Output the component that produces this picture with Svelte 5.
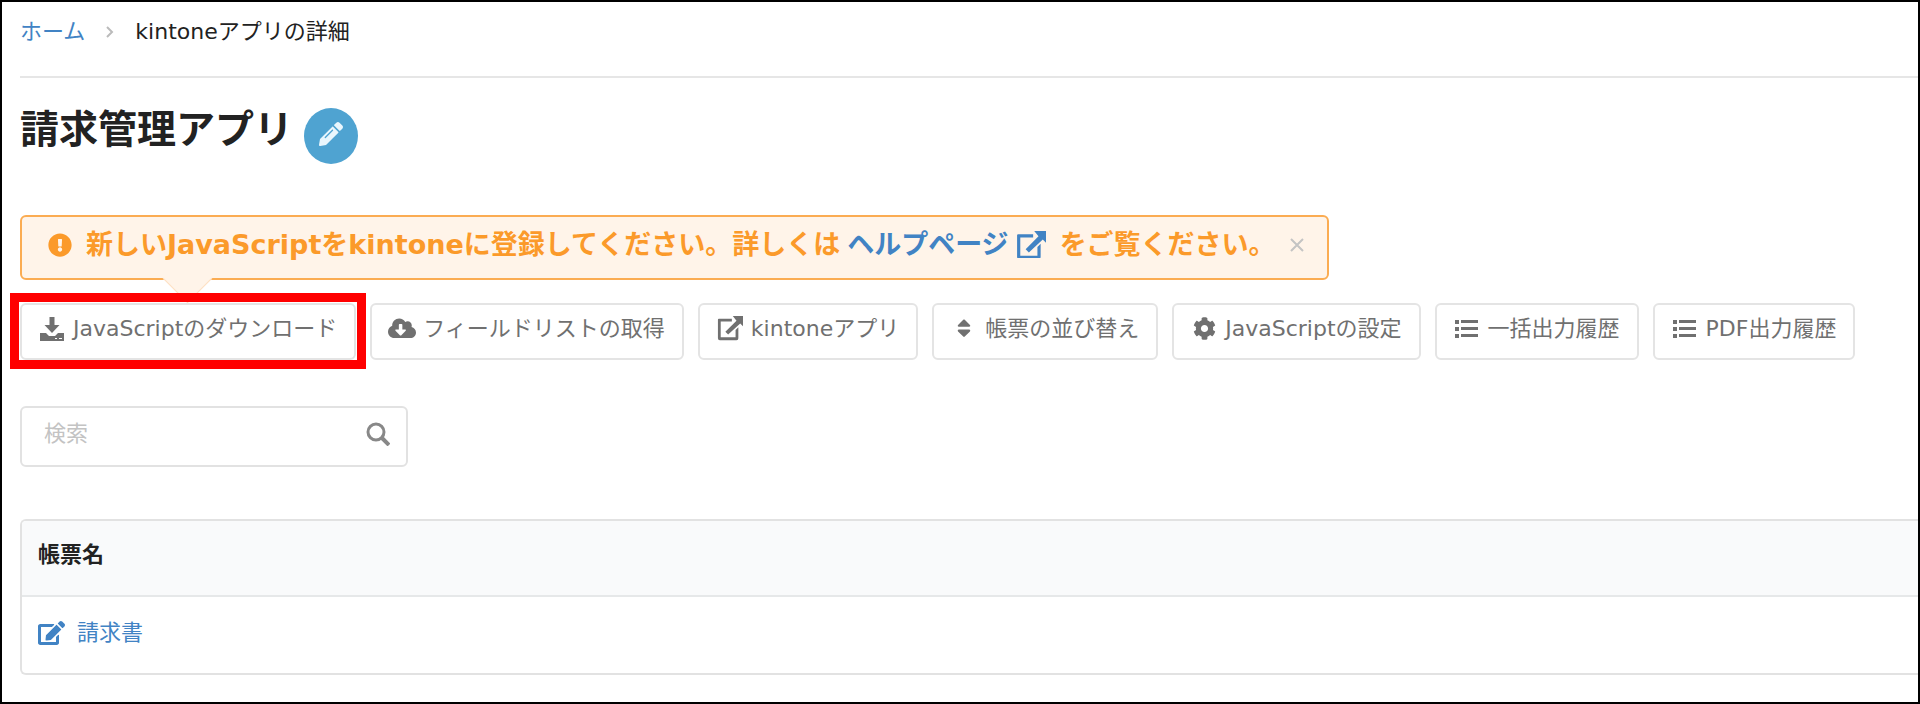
<script>
	const icons = {
		download: {
			box: '0 0 24 24',
			w: 24,
			d: 'M9.500 0h5v8h5l-7.500 8-7.500-8h5zM0 16h6l3 3h6l3-3h6v8H0zM15 21h2v1h-2zM19 21h3v1h-3z'
		},
		cloud: {
			box: '0 0 640 512',
			w: 28,
			d: 'M537.6 226.6c4.1-10.7 6.4-22.4 6.4-34.6 0-53-43-96-96-96-19.7 0-38.1 6-53.3 16.2C367 64.2 315.3 32 256 32c-88.4 0-160 71.6-160 160 0 2.7.1 5.4.2 8.1C40.2 219.8 0 273.2 0 336c0 79.5 64.5 144 144 144h368c70.7 0 128-57.3 128-128 0-61.9-44-113.6-102.4-125.4zm-132.9 88.7L299.3 420.7c-6.2 6.2-16.4 6.2-22.6 0L171.3 315.3c-10.1-10.1-2.9-27.3 11.3-27.3H248V176c0-8.8 7.2-16 16-16h48c8.8 0 16 7.2 16 16v112h65.4c14.2 0 21.4 17.2 11.3 27.3z'
		},
		external: {
			box: '0 0 28 26',
			w: 26,
			d: 'M2 3h14v3H4v17h16v-8l3-3v12a2 2 0 0 1-2 2H3a2 2 0 0 1-2-2V4a1 1 0 0 1 1-1zM17 0h11v11l-3-3L12 20l-3-3L21 5z'
		},
		sort: {
			box: '0 0 320 512',
			w: 14,
			d: 'M41 288h238c21.4 0 32.1 25.9 17 41L177 448c-9.4 9.4-24.6 9.4-33.9 0L24 329c-15.1-15.1-4.4-41 17-41zm255-105L177 64c-9.4-9.4-24.6-9.4-33.9 0L24 183c-15.1 15.1-4.4 41 17 41h238c21.4 0 32.1-25.9 17-41z'
		},
		cog: {
			box: '0 0 512 512',
			w: 23,
			d: 'M487.4 315.7l-42.6-24.6c4.3-23.2 4.3-47 0-70.2l42.6-24.6c4.9-2.8 7.1-8.6 5.5-14-11.1-35.6-30-67.8-54.7-94.6-3.8-4.1-10-5.1-14.8-2.3L380.8 110c-17.9-15.4-38.5-27.3-60.8-35.1V25.8c0-5.6-3.9-10.5-9.4-11.7-36.7-8.2-74.3-7.8-109.2 0-5.5 1.2-9.4 6.1-9.4 11.7V75c-22.2 7.9-42.8 19.8-60.8 35.1L88.7 85.5c-4.9-2.8-11-1.9-14.8 2.3-24.7 26.7-43.6 58.9-54.7 94.6-1.7 5.4.6 11.2 5.5 14L67.3 221c-4.3 23.2-4.3 47 0 70.2l-42.6 24.6c-4.9 2.8-7.1 8.6-5.5 14 11.1 35.6 30 67.8 54.7 94.6 3.8 4.1 10 5.1 14.8 2.3l42.6-24.6c17.9 15.4 38.5 27.3 60.8 35.1v49.2c0 5.6 3.9 10.5 9.4 11.7 36.7 8.2 74.3 7.8 109.2 0 5.5-1.2 9.4-6.1 9.4-11.7v-49.2c22.2-7.9 42.8-19.8 60.8-35.1l42.6 24.6c4.9 2.8 11 1.9 14.8-2.3 24.7-26.7 43.6-58.9 54.7-94.6 1.5-5.5-.7-11.3-5.6-14.1zM256 336c-44.1 0-80-35.9-80-80s35.9-80 80-80 80 35.9 80 80-35.9 80-80 80z'
		},
		list: {
			box: '0 0 24 18',
			w: 24,
			d: 'M0 0h4v4H0zM6 0h17v3H6zM0 7h4v4H0zM6 7h17v3H6zM0 14h4v4H0zM6 14h17v3H6z'
		},
		warning: {
			box: '0 0 512 512',
			w: 24,
			d: 'M504 256c0 136.997-111.043 248-248 248S8 392.997 8 256C8 119.083 119.043 8 256 8s248 111.083 248 248zm-248 50c-25.405 0-46 20.595-46 46s20.595 46 46 46 46-20.595 46-46-20.595-46-46-46zm-43.673-165.346l7.418 136c.347 6.364 5.609 11.346 11.982 11.346h48.546c6.373 0 11.635-4.982 11.982-11.346l7.418-136c.375-6.874-5.098-12.654-11.982-12.654h-63.383c-6.884 0-12.356 5.78-11.981 12.654z'
		},
		pencil: {
			box: '0 0 512 512',
			w: 24,
			d: 'M497.9 142.1l-46.1 46.1c-4.7 4.7-12.3 4.7-17 0l-111-111c-4.7-4.7-4.7-12.3 0-17l46.1-46.1c18.7-18.7 49.1-18.7 67.9 0l60.1 60.1c18.8 18.7 18.8 49.1 0 67.9zM284.2 99.8L21.6 362.4.4 483.9c-2.9 16.4 11.4 30.6 27.8 27.8l121.5-21.3 262.6-262.6c4.7-4.7 4.7-12.3 0-17l-111-111c-4.8-4.7-12.4-4.7-17.1 0zM124.1 339.9c-5.5-5.5-5.5-14.3 0-19.8l154-154c5.5-5.5 14.3-5.5 19.8 0s5.5 14.3 0 19.8l-154 154c-5.5 5.5-14.3 5.5-19.8 0z'
		},
		edit: {
			box: '0 0 576 512',
			w: 27,
			d: 'M402.6 83.2l90.2 90.2c3.8 3.8 3.8 10 0 13.8L274.4 405.6l-92.8 10.3c-12.4 1.4-22.9-9.1-21.5-21.5l10.3-92.8L388.8 83.2c3.8-3.8 10-3.8 13.8 0zm162-22.9l-48.8-48.8c-15.2-15.2-39.9-15.2-55.2 0l-35.4 35.4c-3.8 3.8-3.8 10 0 13.8l90.2 90.2c3.8 3.8 10 3.8 13.8 0l35.4-35.4c15.2-15.3 15.2-40 0-55.2zM384 346.2V448H64V128h229.8c3.2 0 6.2-1.3 8.5-3.5l40-40c7.6-7.6 2.2-20.5-8.5-20.5H48C21.5 64 0 85.5 0 112v352c0 26.5 21.5 48 48 48h352c26.5 0 48-21.5 48-48V306.2c0-10.7-12.9-16-20.5-8.5l-40 40c-2.2 2.3-3.5 5.3-3.5 8.5z'
		}
	};

	const actions = [
		{ icon: 'download', label: 'JavaScriptのダウンロード', marked: true },
		{ icon: 'cloud', label: 'フィールドリストの取得' },
		{ icon: 'external', label: 'kintoneアプリ' },
		{ icon: 'sort', label: '帳票の並び替え' },
		{ icon: 'cog', label: 'JavaScriptの設定' },
		{ icon: 'list', label: '一括出力履歴' },
		{ icon: 'list', label: 'PDF出力履歴' }
	];

	const reports = ['請求書'];

	let keyword = $state('');
	let showNotice = $state(true);
	let filtered = $derived(reports.filter((name) => name.includes(keyword)));
</script>

{#snippet icon(name, width = icons[name].w)}
	<svg class="icon" viewBox={icons[name].box} {width} aria-hidden="true">
		<path fill="currentColor" fill-rule="evenodd" d={icons[name].d} />
	</svg>
{/snippet}

<main>
	<nav>
		<a href="#home">ホーム</a>
		<svg class="chevron" viewBox="0 0 8 12" width="8" aria-hidden="true">
			<path d="M1 1l5 5-5 5" fill="none" stroke="currentColor" stroke-width="2" />
		</svg>
		<span>kintoneアプリの詳細</span>
	</nav>

	<div class="title">
		<h1>請求管理アプリ</h1>
		<button class="rename" aria-label="編集">{@render icon('pencil')}</button>
	</div>

	{#if showNotice}
		<div class="notice">
			{@render icon('warning')}
			<p>
				<span>新しいJavaScriptをkintoneに登録してください。詳しくは</span>
				<a href="#help">ヘルプページ{@render icon('external', 30)}</a>
				<span>をご覧ください。</span>
			</p>
			<button class="close" aria-label="閉じる" onclick={() => (showNotice = false)}>
				<svg viewBox="0 0 14 14" width="14" aria-hidden="true">
					<path d="M1 1l12 12M13 1L1 13" stroke="currentColor" stroke-width="2" />
				</svg>
			</button>
		</div>
	{/if}

	<div class="actions">
		{#each actions as action}
			<button class:marked={action.marked}>
				<span class="slot">{@render icon(action.icon)}</span>{action.label}
			</button>
		{/each}
	</div>

	<div class="search">
		<input type="text" placeholder="検索" aria-label="検索" bind:value={keyword} />
		<svg viewBox="0 0 24 24" width="24" aria-hidden="true">
			<g fill="none" stroke="currentColor" stroke-width="3">
				<circle cx="10" cy="10" r="8" />
				<path d="M16 16l7 7" stroke-width="4" />
			</g>
		</svg>
	</div>

	<table>
		<thead>
			<tr><th>帳票名</th></tr>
		</thead>
		<tbody>
			{#each filtered as name}
				<tr>
					<td><a href="#report">{@render icon('edit')}{name}</a></td>
				</tr>
			{/each}
		</tbody>
	</table>
</main>

<style>
	:global(body) {
		background: #fff;
	}
	main {
		box-sizing: border-box;
		min-height: 100vh;
		border: 2px solid #000;
		padding: 14px 0 0 18px;
		overflow: hidden;
		font-family: 'DejaVu Sans', 'Noto Sans CJK JP', sans-serif;
		font-size: 22px;
		line-height: 32px;
		color: #222;
	}
	a {
		color: #4183c4;
		text-decoration: none;
	}
	button,
	input {
		font: inherit;
	}
	button {
		cursor: pointer;
	}
	.icon {
		flex: none;
	}
	nav {
		display: flex;
		align-items: center;
		gap: 21px;
		padding-bottom: 28px;
		border-bottom: 2px solid #e6e6e6;
	}
	.chevron {
		color: #bbb;
	}
	.title {
		display: flex;
		align-items: center;
		gap: 11px;
		margin-top: 30px;
	}
	h1 {
		margin: 0;
		padding-bottom: 12px;
		font-size: 39px;
		line-height: 44px;
	}
	.rename {
		display: flex;
		align-items: center;
		justify-content: center;
		width: 54px;
		height: 56px;
		padding: 0 0 4px;
		border: 0;
		border-radius: 50%;
		background: #4fa3d1;
		color: #e9f6fd;
	}
	.notice {
		position: relative;
		display: flex;
		align-items: center;
		gap: 14px;
		box-sizing: border-box;
		width: max-content;
		height: 65px;
		margin-top: 51px;
		padding: 0 23px 6px 26px;
		border: 2px solid #fbac52;
		border-radius: 6px;
		background: #fff4e9;
		color: #fb9a2a;
		font-size: 27px;
		font-weight: bold;
	}
	/* arrow pointing at the download button */
	.notice::after {
		content: '';
		position: absolute;
		top: 44px;
		left: 148px;
		width: 34px;
		height: 34px;
		border: 1px solid #fde0c2;
		border-width: 0 1px 1px 0;
		background: #fff4e9;
		transform: rotate(45deg);
	}
	.notice p {
		display: flex;
		gap: 7px;
		margin: 0;
	}
	.notice a {
		display: flex;
		align-items: center;
		gap: 7px;
		margin-right: 7px;
	}
	.close {
		display: flex;
		padding: 0;
		border: 0;
		background: none;
		color: #c4c4c4;
	}
	.actions {
		position: relative;
		display: flex;
		flex-wrap: wrap;
		gap: 14px;
		margin-top: 23px;
	}
	.actions button {
		display: flex;
		align-items: center;
		height: 57px;
		padding: 0 17px 6px 16px;
		border: 2px solid #e4e4e4;
		border-radius: 6px;
		background: #fff;
		color: #707070;
	}
	.actions .marked {
		position: relative;
	}
	.marked::after {
		content: '';
		position: absolute;
		inset: -12px -12px -11px;
		border: 9px solid #f00;
	}
	.slot {
		display: flex;
		justify-content: center;
		width: 28px;
		margin-right: 7px;
	}
	.search {
		display: flex;
		align-items: center;
		box-sizing: border-box;
		width: 388px;
		height: 61px;
		margin-top: 46px;
		padding: 0 16px 6px 22px;
		border: 2px solid #e2e2e2;
		border-radius: 6px;
		color: #888;
	}
	input {
		flex: 1;
		min-width: 0;
		padding: 0;
		border: 0;
		outline: 0;
		background: none;
		color: #222;
	}
	input::placeholder {
		color: #c3c3c3;
	}
	table {
		width: 100%;
		margin-top: 52px;
		border: 2px solid #e2e2e2;
		border-right: 0;
		border-radius: 6px 0 0 6px;
		border-spacing: 0;
		overflow: hidden;
	}
	th,
	td {
		padding: 18px 16px 24px;
		text-align: left;
	}
	th {
		border-bottom: 2px solid #e6e8e9;
		background: #f9fafb;
	}
	td {
		padding-top: 20px;
	}
	td a {
		display: flex;
		align-items: center;
		gap: 12px;
	}
</style>
